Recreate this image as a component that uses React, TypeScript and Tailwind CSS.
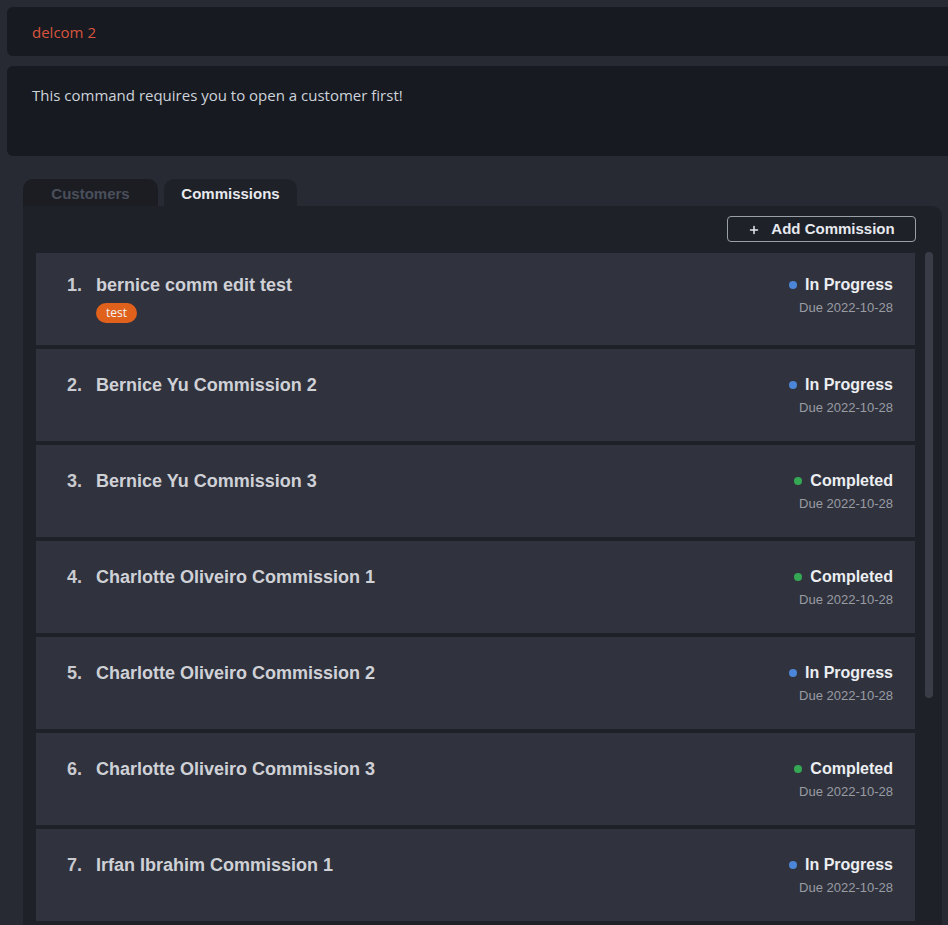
import { Plus } from "lucide-react";

type Commission = {
  title: string;
  status: "In Progress" | "Completed";
  due: string;
  tags?: string[];
};

const commissions: Commission[] = [
  { title: "bernice comm edit test", status: "In Progress", due: "2022-10-28", tags: ["test"] },
  { title: "Bernice Yu Commission 2", status: "In Progress", due: "2022-10-28" },
  { title: "Bernice Yu Commission 3", status: "Completed", due: "2022-10-28" },
  { title: "Charlotte Oliveiro Commission 1", status: "Completed", due: "2022-10-28" },
  { title: "Charlotte Oliveiro Commission 2", status: "In Progress", due: "2022-10-28" },
  { title: "Charlotte Oliveiro Commission 3", status: "Completed", due: "2022-10-28" },
  { title: "Irfan Ibrahim Commission 1", status: "In Progress", due: "2022-10-28" },
];

function CommissionCard({ index, item }: { index: number; item: Commission }) {
  const done = item.status === "Completed";
  return (
    <div
      className={`flex h-[92px] shrink-0 justify-between bg-[#30333e] pl-[31px] pr-[22px] ${
        item.tags ? "pt-[22px]" : "pt-[26px]"
      }`}
    >
      <div className="flex items-start">
        <span className="w-[29px] text-[18px] font-bold leading-[21px] text-[#c9cbd0]">{index}.</span>
        <div className="flex flex-col">
          <span className="text-[18px] font-bold leading-[21px] text-[#cfd1d6]">{item.title}</span>
          {item.tags && (
            <div className="mt-[7px] flex gap-1">
              {item.tags.map((t) => (
                <span
                  key={t}
                  className="rounded-full bg-[#e0611c] px-[10px] text-[12px] leading-5 text-[#f3f3f3] [font-family:'Open_Sans',sans-serif]"
                >
                  {t}
                </span>
              ))}
            </div>
          )}
        </div>
      </div>
      <div className="flex flex-col items-end">
        <div className="flex items-center gap-[8px]">
          <span className={`h-[8px] w-[8px] rounded-full ${done ? "bg-[#35a853]" : "bg-[#4c86d8]"}`} />
          <span className="text-[16px] font-bold leading-5 text-[#eceef1]">{item.status}</span>
        </div>
        <span className="mt-[5px] text-[13px] leading-4 text-[#9a9ca3]">Due {item.due}</span>
      </div>
    </div>
  );
}

export default function App() {
  return (
    <div className="h-[925px] w-[948px] overflow-hidden bg-[#272a33] pt-[7px] [font-family:'Liberation_Sans',Arial,sans-serif]">
      <div className="ml-[7px] w-[960px]">
        <div className="flex h-[49px] items-center rounded-md bg-[#181a21] pl-[25px] pt-[2px]">
          <span className="text-[15px] text-[#d8553d] [font-family:'Open_Sans',sans-serif]">delcom 2</span>
        </div>
        <div className="mt-[10px] h-[90px] rounded-md bg-[#181a21] pl-[25px] pt-[18px]">
          <span className="text-[15px] text-[#cdd3da] [font-family:'Open_Sans',sans-serif]">
            This command requires you to open a customer first!
          </span>
        </div>
      </div>

      <div className="mx-[23px] mt-[23px] w-[919px]">
        <div className="flex gap-[6px]">
          <div className="flex h-[27px] w-[135px] items-center justify-center rounded-t-[10px] bg-[#1b1d23] pt-[3px] text-[15px] font-bold text-[#4a4f5b]">
            Customers
          </div>
          <div className="flex h-[27px] w-[133px] items-center justify-center rounded-t-[10px] bg-[#1f2128] pt-[3px] text-[15px] font-bold text-[#e6e9ee]">
            Commissions
          </div>
        </div>
        <div className="h-[720px] rounded-tr-[10px] bg-[#1f2128] pl-[13px] pr-[9px] pt-[10px]">
          <div className="flex justify-end pr-[17px]">
            <button className="flex h-[26px] w-[189px] items-center justify-center gap-[11px] rounded-[4px] border border-[#9aa0a8] pt-[1px] text-[15px] font-bold text-[#e6e9ee]">
              <Plus size={12} strokeWidth={3} />
              Add Commission
            </button>
          </div>
          <div className="mt-[11px] flex gap-[10px]">
            <div className="flex w-[879px] flex-col gap-[4px]">
              {commissions.map((c, i) => (
                <CommissionCard key={i} index={i + 1} item={c} />
              ))}
            </div>
            <div className="mt-[-1px] h-[446px] w-[8px] rounded-full bg-[#3a3d47]" />
          </div>
        </div>
      </div>
    </div>
  );
}
